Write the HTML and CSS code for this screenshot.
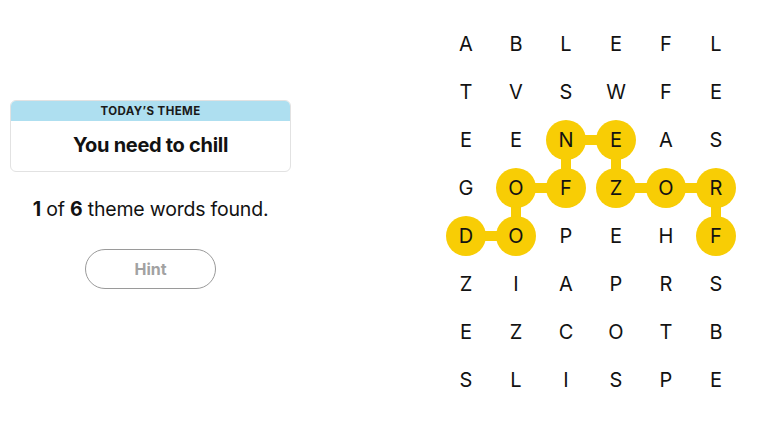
FILE: index.html
```html
<!DOCTYPE html>
<html>
<head>
<meta charset="utf-8">
<link rel="stylesheet" href="styles.css">
</head>
<body>
<div class="page">
  <section class="side">
    <div class="theme-card">
      <div class="theme-head">TODAY’S THEME</div>
      <div class="theme-body">You need to chill</div>
    </div>
    <p class="progress"><b>1</b> of <b>6</b> theme words found.</p>
    <button class="hint">Hint</button>
  </section>
  <section class="board">
    <svg class="trail" width="300" height="384" viewBox="0 0 300 384">
      <g fill="none" stroke="#f8cd05" stroke-width="10" stroke-linejoin="round">
        <polyline points="25,216 75,216 75,168 125,168 125,120 175,120 175,168 225,168 275,168 275,216"/>
      </g>
      <g fill="#f8cd05">
        <circle cx="25" cy="216" r="20"/>
        <circle cx="75" cy="216" r="20"/>
        <circle cx="75" cy="168" r="20"/>
        <circle cx="125" cy="168" r="20"/>
        <circle cx="125" cy="120" r="20"/>
        <circle cx="175" cy="120" r="20"/>
        <circle cx="175" cy="168" r="20"/>
        <circle cx="225" cy="168" r="20"/>
        <circle cx="275" cy="168" r="20"/>
        <circle cx="275" cy="216" r="20"/>
      </g>
    </svg>
    <div class="grid">
      <span>A</span><span>B</span><span>L</span><span>E</span><span>F</span><span>L</span>
      <span>T</span><span>V</span><span>S</span><span>W</span><span>F</span><span>E</span>
      <span>E</span><span>E</span><span>N</span><span>E</span><span>A</span><span>S</span>
      <span>G</span><span>O</span><span>F</span><span>Z</span><span>O</span><span>R</span>
      <span>D</span><span>O</span><span>P</span><span>E</span><span>H</span><span>F</span>
      <span>Z</span><span>I</span><span>A</span><span>P</span><span>R</span><span>S</span>
      <span>E</span><span>Z</span><span>C</span><span>O</span><span>T</span><span>B</span>
      <span>S</span><span>L</span><span>I</span><span>S</span><span>P</span><span>E</span>
    </div>
  </section>
</div>
</body>
</html>
```

FILE: styles.css
```css
* { box-sizing: border-box; }
html, body { margin: 0; padding: 0; background: #fff; }
body {
  font-family: Inter, "Liberation Sans", sans-serif;
  color: #121212;
  width: 758px;
  height: 426px;
  overflow: hidden;
}
.page {
  display: flex;
  align-items: flex-start;
}
.side {
  width: 301px;
  padding: 100px 10px 0 10px;
  display: flex;
  flex-direction: column;
  align-items: center;
}
.theme-card {
  width: 281px;
  border: 1px solid #e2e2e2;
  border-radius: 6px;
  overflow: hidden;
}
.theme-head {
  background: #aedff0;
  height: 20px;
  line-height: 20px;
  text-align: center;
  font-size: 11.5px;
  font-weight: 700;
  letter-spacing: 0.4px;
  color: #1a1a1a;
}
.theme-body {
  height: 50px;
  padding-bottom: 3px;
  display: flex;
  align-items: center;
  justify-content: center;
  font-size: 20px;
  font-weight: 750;
  letter-spacing: -0.3px;
}
.progress {
  margin: 26px 0 0 0;
  font-size: 19.5px;
  line-height: 22px;
  font-weight: 400;
  letter-spacing: -0.2px;
}
.progress b { font-weight: 700; }
.hint {
  margin-top: 29px;
  width: 131px;
  height: 40px;
  padding-bottom: 2px;
  border: 1.5px solid #9a9a9a;
  border-radius: 20px;
  background: #fff;
  color: #a2a2a2;
  font-family: inherit;
  font-size: 16px;
  font-weight: 700;
}
.board {
  position: relative;
  margin: 20px 0 0 140px;
  width: 300px;
  height: 384px;
}
.trail {
  position: absolute;
  left: 0;
  top: 0;
}
.grid {
  position: relative;
  display: grid;
  grid-template-columns: repeat(6, 50px);
  grid-template-rows: repeat(8, 48px);
}
.grid span {
  display: flex;
  align-items: center;
  justify-content: center;
  font-size: 20px;
  font-weight: 400;
  color: #121212;
}
```
